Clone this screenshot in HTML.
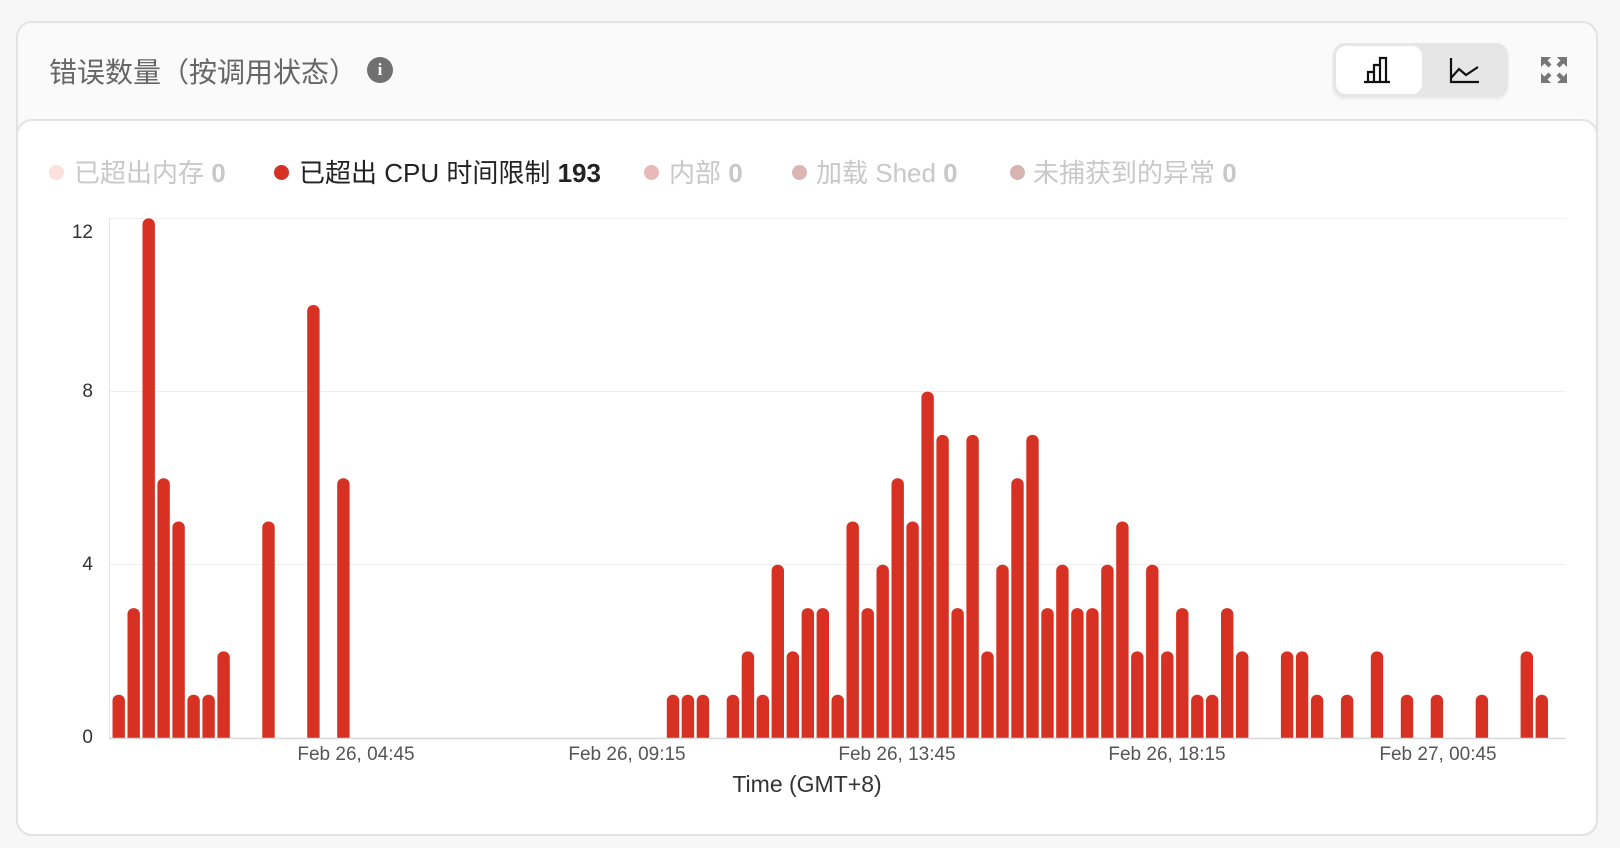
<!DOCTYPE html>
<html><head><meta charset="utf-8"><style>
body{margin:0;width:1620px;height:848px;background:#f7f7f7;font-family:"Liberation Sans","Noto Sans CJK SC",sans-serif;position:relative;overflow:hidden}
.card{position:absolute;left:16px;top:21px;width:1582px;height:815px;border:2px solid #e3e3e3;border-radius:16px;background:#fafafa;box-sizing:border-box}
.inner{position:absolute;left:16px;top:119px;width:1582px;height:717px;border:2px solid #e3e3e3;border-radius:16px;background:#fff;box-sizing:border-box}
.title{position:absolute;left:49px;top:51px;font-size:28px;color:#666;}
.info{position:absolute;left:367px;top:57px;width:26px;height:26px;border-radius:50%;background:#707070;color:#fff;font:bold 17px "Liberation Serif",serif;text-align:center;line-height:26px}
.tg{position:absolute;left:1333px;top:43px;width:175px;height:54px;border-radius:12px;background:#e6e6e6;box-shadow:0 2px 3px rgba(0,0,0,.08)}
.tg .a{position:absolute;left:3px;top:3px;width:86px;height:48px;border-radius:10px;background:#fff}
.leg{position:absolute;top:153px;font-size:26px;color:#c8c8c8;white-space:nowrap}
.leg b{font-weight:bold}
.dot{position:absolute;top:165px;width:15px;height:15px;border-radius:50%}
.yl{position:absolute;font-size:19px;color:#333;text-align:right;width:30px;left:63px}
.xl{position:absolute;top:744px;font-size:19px;color:#555;transform:translateX(-50%);white-space:nowrap}
</style></head><body>
<div class="card"></div>
<div class="title">错误数量（按调用状态）</div>
<div class="info">i</div>
<div class="tg"><div class="a"></div>
<svg style="position:absolute;left:27px;top:12px" width="34" height="30" viewBox="0 0 34 30" fill="none" stroke="#111" stroke-width="2.2"><path d="M4 27H30M8 27V17H14V27M14 27V10H20V27M20 27V3H26V27"/></svg>
<svg style="position:absolute;left:114px;top:12px" width="34" height="30" viewBox="0 0 34 30" fill="none" stroke="#111" stroke-width="2.2"><path d="M4 3V27H32M4 23L12 14L19 20L31 12"/></svg>
</div>
<svg style="position:absolute;left:1540px;top:56px" width="28" height="28" viewBox="0 0 28 28" fill="#777"><path d="M1 1h10l-3.5 3.5 4 4-3 3-4-4L1 11zM27 1v10l-3.5-3.5-4 4-3-3 4-4L17 1zM1 27V17l3.5 3.5 4-4 3 3-4 4L11 27zM27 27H17l3.5-3.5-4-4 3-3 4 4L27 17z"/></svg>
<div class="inner"></div>
<div class="dot" style="left:49px;background:#fbe0dc"></div><div class="leg" style="left:74px">已超出内存 <b>0</b></div>
<div class="dot" style="left:274px;background:#d63122"></div><div class="leg" style="left:299px;color:#222">已超出 CPU 时间限制 <b>193</b></div>
<div class="dot" style="left:644px;background:#e8b9b6"></div><div class="leg" style="left:669px">内部 <b>0</b></div>
<div class="dot" style="left:792px;background:#dcb6b3"></div><div class="leg" style="left:816px">加载 Shed <b>0</b></div>
<div class="dot" style="left:1010px;background:#d8b4b1"></div><div class="leg" style="left:1033px">未捕获到的异常 <b>0</b></div>
<div class="yl" style="top:222px">12</div>
<div class="yl" style="top:381px">8</div>
<div class="yl" style="top:554px">4</div>
<div class="yl" style="top:727px">0</div>
<svg style="position:absolute;left:0;top:0" width="1620" height="848">
<defs><clipPath id="c"><rect x="0" y="0" width="1620" height="738"/></clipPath></defs>
<g stroke="#efefef" stroke-width="1"><line x1="110" y1="218.5" x2="1566" y2="218.5"/><line x1="110" y1="391.5" x2="1566" y2="391.5"/><line x1="110" y1="564.5" x2="1566" y2="564.5"/></g>
<line x1="109.5" y1="218" x2="109.5" y2="738" stroke="#e6e6e6"/>
<g fill="#d63122" clip-path="url(#c)" transform="translate(3,0)">
<rect x="109.5" y="694.7" width="12.4" height="60" rx="6"/>
<rect x="124.5" y="608.1" width="12.4" height="150" rx="6"/>
<rect x="139.5" y="218.4" width="12.4" height="530" rx="6"/>
<rect x="154.4" y="478.2" width="12.4" height="270" rx="6"/>
<rect x="169.4" y="521.5" width="12.4" height="230" rx="6"/>
<rect x="184.4" y="694.7" width="12.4" height="60" rx="6"/>
<rect x="199.4" y="694.7" width="12.4" height="60" rx="6"/>
<rect x="214.4" y="651.4" width="12.4" height="100" rx="6"/>
<rect x="259.3" y="521.5" width="12.4" height="230" rx="6"/>
<rect x="304.2" y="305" width="12.4" height="450" rx="6"/>
<rect x="334.2" y="478.2" width="12.4" height="270" rx="6"/>
<rect x="663.8" y="694.7" width="12.4" height="60" rx="6"/>
<rect x="678.7" y="694.7" width="12.4" height="60" rx="6"/>
<rect x="693.7" y="694.7" width="12.4" height="60" rx="6"/>
<rect x="723.7" y="694.7" width="12.4" height="60" rx="6"/>
<rect x="738.7" y="651.4" width="12.4" height="100" rx="6"/>
<rect x="753.6" y="694.7" width="12.4" height="60" rx="6"/>
<rect x="768.6" y="564.8" width="12.4" height="190" rx="6"/>
<rect x="783.6" y="651.4" width="12.4" height="100" rx="6"/>
<rect x="798.6" y="608.1" width="12.4" height="150" rx="6"/>
<rect x="813.6" y="608.1" width="12.4" height="150" rx="6"/>
<rect x="828.5" y="694.7" width="12.4" height="60" rx="6"/>
<rect x="843.5" y="521.5" width="12.4" height="230" rx="6"/>
<rect x="858.5" y="608.1" width="12.4" height="150" rx="6"/>
<rect x="873.5" y="564.8" width="12.4" height="190" rx="6"/>
<rect x="888.5" y="478.2" width="12.4" height="270" rx="6"/>
<rect x="903.4" y="521.5" width="12.4" height="230" rx="6"/>
<rect x="918.4" y="391.6" width="12.4" height="360" rx="6"/>
<rect x="933.4" y="434.9" width="12.4" height="320" rx="6"/>
<rect x="948.4" y="608.1" width="12.4" height="150" rx="6"/>
<rect x="963.4" y="434.9" width="12.4" height="320" rx="6"/>
<rect x="978.3" y="651.4" width="12.4" height="100" rx="6"/>
<rect x="993.3" y="564.8" width="12.4" height="190" rx="6"/>
<rect x="1008.3" y="478.2" width="12.4" height="270" rx="6"/>
<rect x="1023.3" y="434.9" width="12.4" height="320" rx="6"/>
<rect x="1038.3" y="608.1" width="12.4" height="150" rx="6"/>
<rect x="1053.2" y="564.8" width="12.4" height="190" rx="6"/>
<rect x="1068.2" y="608.1" width="12.4" height="150" rx="6"/>
<rect x="1083.2" y="608.1" width="12.4" height="150" rx="6"/>
<rect x="1098.2" y="564.8" width="12.4" height="190" rx="6"/>
<rect x="1113.2" y="521.5" width="12.4" height="230" rx="6"/>
<rect x="1128.1" y="651.4" width="12.4" height="100" rx="6"/>
<rect x="1143.1" y="564.8" width="12.4" height="190" rx="6"/>
<rect x="1158.1" y="651.4" width="12.4" height="100" rx="6"/>
<rect x="1173.1" y="608.1" width="12.4" height="150" rx="6"/>
<rect x="1188.1" y="694.7" width="12.4" height="60" rx="6"/>
<rect x="1203.0" y="694.7" width="12.4" height="60" rx="6"/>
<rect x="1218.0" y="608.1" width="12.4" height="150" rx="6"/>
<rect x="1233.0" y="651.4" width="12.4" height="100" rx="6"/>
<rect x="1277.9" y="651.4" width="12.4" height="100" rx="6"/>
<rect x="1292.9" y="651.4" width="12.4" height="100" rx="6"/>
<rect x="1307.9" y="694.7" width="12.4" height="60" rx="6"/>
<rect x="1337.9" y="694.7" width="12.4" height="60" rx="6"/>
<rect x="1367.8" y="651.4" width="12.4" height="100" rx="6"/>
<rect x="1397.8" y="694.7" width="12.4" height="60" rx="6"/>
<rect x="1427.7" y="694.7" width="12.4" height="60" rx="6"/>
<rect x="1472.7" y="694.7" width="12.4" height="60" rx="6"/>
<rect x="1517.6" y="651.4" width="12.4" height="100" rx="6"/>
<rect x="1532.6" y="694.7" width="12.4" height="60" rx="6"/>
</g>
<line x1="109" y1="738.5" x2="1566" y2="738.5" stroke="#d8d8d8" stroke-width="1.5"/>
</svg>
<div class="xl" style="left:356px">Feb 26, 04:45</div>
<div class="xl" style="left:627px">Feb 26, 09:15</div>
<div class="xl" style="left:897px">Feb 26, 13:45</div>
<div class="xl" style="left:1167px">Feb 26, 18:15</div>
<div class="xl" style="left:1438px">Feb 27, 00:45</div>
<div class="xl" style="left:807px;top:771px;font-size:23px;color:#333">Time (GMT+8)</div>
</body></html>
